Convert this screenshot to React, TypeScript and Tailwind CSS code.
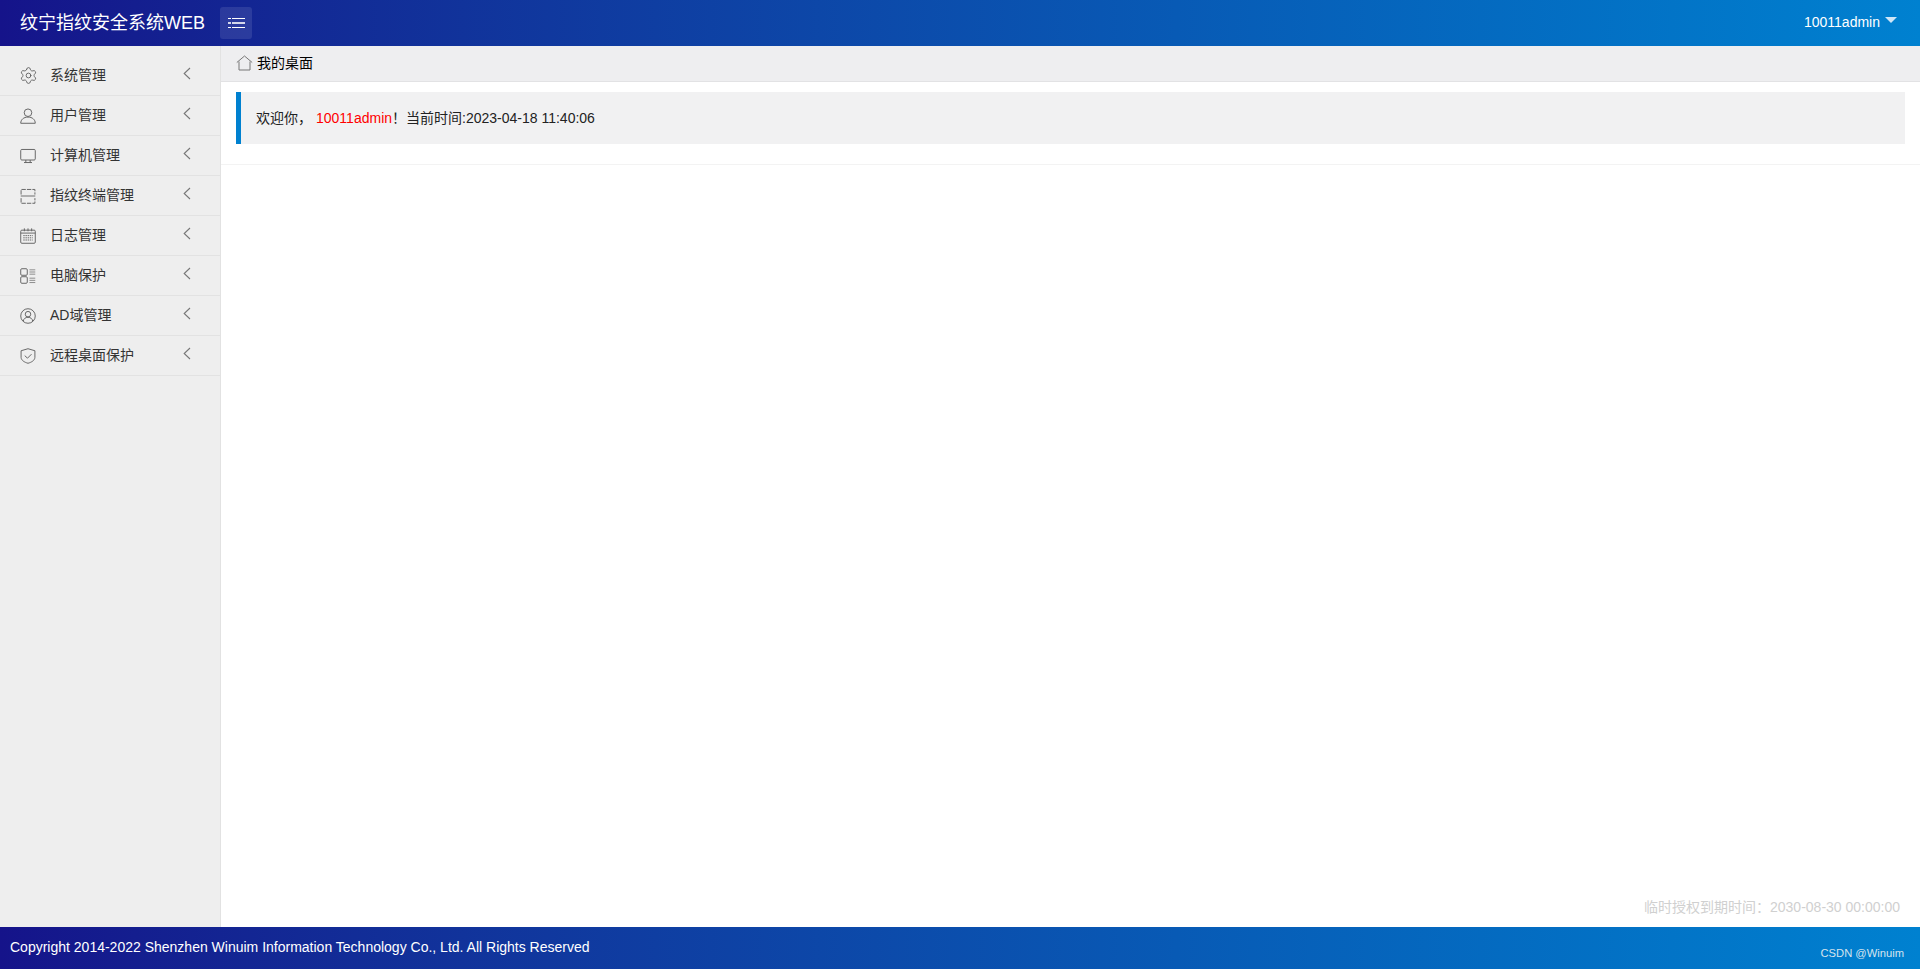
import { ReactNode } from "react";
import { Settings } from "lucide-react";

const stroke = {
  fill: "none",
  stroke: "#666",
  strokeWidth: 1.35,
};

/* ---- menu icons, drawn to match the iconfont glyphs ---- */
const icons: Record<string, ReactNode> = {
  user: (
    <>
      <circle cx="11" cy="6.500" r="5.200" />
      <path d="M1 21c0-5 4-8.500 10-8.500S21 16 21 21z" />
    </>
  ),
  monitor: (
    <>
      <rect x="1" y="2" width="20" height="14.500" rx="1.500" />
      <path d="M8 16.500v3.500M14 16.500v3.500M5.500 20h11" />
    </>
  ),
  terminal: (
    <>
      <path d="M1.500 9V2h19v7M1.500 14v7h19v-7" strokeDasharray="6 1.500" />
      <path d="M1 11h20" strokeWidth="1.800" stroke="#8c8c8c" />
    </>
  ),
  calendar: (
    <>
      <rect x="1" y="3" width="20" height="18" rx="1.500" />
      <path d="M6 .500v4M11 .500v4M16 .500v4M1 7h20" />
      <path d="M4.500 10.500h13M4.500 13.500h13M4.500 16.500h13" strokeDasharray="2 1" />
    </>
  ),
  apps: (
    <>
      <rect x="1" y="1" width="9" height="9" rx="1.500" />
      <rect x="1" y="12" width="9" height="9" rx="1.500" />
      <path d="M13 2.500h8M13 5.500h8M13 8.500h8M13 14h8M13 17h8M13 20h8" stroke="#8c8c8c" />
    </>
  ),
  account: (
    <>
      <circle cx="11" cy="11" r="10" />
      <circle cx="11" cy="8.500" r="3.800" />
      <path d="M4.500 18c.4-3.200 3-5.200 6.500-5.200s6.100 2 6.500 5.200" />
    </>
  ),
  shield: (
    <>
      <path d="M11 1l9.500 2.800v9c0 4-4.500 6.800-9.500 8.200-5-1.400-9.500-4.200-9.500-8.200v-9z" />
      <path d="M6.500 10.500l3.800 3.500 5.500-5.500" />
    </>
  ),
};

const menu = [
  { label: "系统管理", icon: "gear" },
  { label: "用户管理", icon: "user" },
  { label: "计算机管理", icon: "monitor" },
  { label: "指纹终端管理", icon: "terminal" },
  { label: "日志管理", icon: "calendar" },
  { label: "电脑保护", icon: "apps" },
  { label: "AD域管理", icon: "account" },
  { label: "远程桌面保护", icon: "shield" },
];

function SideItem({ label, icon }: { label: string; icon: string }) {
  return (
    <div className="flex h-[40px] items-center border-b border-[#e2e2e2] pl-[20px] text-[14px] text-[#333]">
      <span className="flex h-[16px] w-[16px] shrink-0 items-center justify-center">
        {icon === "gear" ? (
          <Settings size={19} strokeWidth={1.05} color="#555" className="shrink-0" />
        ) : (
          <svg width="16" height="16" viewBox="0 0 22 22" {...stroke} className="shrink-0">
            {icons[icon]}
          </svg>
        )}
      </span>
      <span className="ml-[14px]">{label}</span>
      <svg width="8" height="13" viewBox="0 0 8 13" fill="none" stroke="#777" strokeWidth="1.1" className="ml-auto mr-[29px] mt-[-4px]">
        <path d="M7 1L1.200 6.500 7 12" />
      </svg>
    </div>
  );
}

function MenuLine({ thick }: { thick?: boolean }) {
  return (
    <span className="flex items-center gap-[1px]">
      <i className={thick ? "h-[2px] w-[3px] bg-white/80" : "h-[1px] w-[3px] bg-white"} />
      <i className={thick ? "h-[2px] w-[13px] bg-white/80" : "h-[1px] w-[13px] bg-white"} />
    </span>
  );
}

export default function App() {
  return (
    <div
      className="flex h-[969px] flex-col overflow-hidden bg-white text-[14px] text-[#222]"
      style={{ fontFamily: '"Liberation Sans", "Noto Sans CJK SC", sans-serif' }}
    >
      {/* header */}
      <header className="flex h-[46px] shrink-0 items-center bg-gradient-to-r from-[#15138a] to-[#0081d0] text-white">
        <div className="ml-[20px] text-[18px]">纹宁指纹安全系统WEB</div>
        <button className="ml-[15px] flex h-[32px] w-[32px] flex-col items-center justify-center gap-[3px] rounded-[3px] bg-white/10">
          <MenuLine />
          <MenuLine thick />
          <MenuLine />
        </button>
        <div className="ml-auto mr-[23px] flex items-center pb-[2px] text-[14px]">
          10011admin
          <span className="ml-[5px] mt-[-4px] h-0 w-0 border-x-[6px] border-t-[6px] border-x-transparent border-t-[#cfe6f7]" />
        </div>
      </header>

      <div className="flex min-h-0 flex-1">
        {/* sidebar */}
        <aside className="w-[221px] shrink-0 border-r border-[#e2e2e2] bg-[#eeeeee] pt-[10px]">
          {menu.map((m) => (
            <SideItem key={m.label} label={m.label} icon={m.icon} />
          ))}
        </aside>

        {/* main */}
        <main className="flex min-w-0 flex-1 flex-col">
          <div className="flex h-[36px] shrink-0 items-center border-b border-[#e2e2e4] bg-[#eeeef0] pl-[15px] text-[14px] text-black">
            <svg width="17" height="16" viewBox="0 0 17 16" fill="none" stroke="#777" strokeWidth="1" className="mt-[-2px]">
              <path d="M.8 7.500L8.500 1l7.700 6.500M3 6.500v8.500h11v-8.500" />
            </svg>
            <span className="ml-[4px]">我的桌面</span>
          </div>

          <div className="border-b border-[#f3f3f3] px-[15px] pb-[20px] pt-[10px]">
            <div className="flex h-[52px] items-center border-l-[5px] border-[#0081d0] bg-[#f1f1f2] pl-[15px] text-[14px] text-[#222]">
              <span>欢迎你，</span>
              <span className="ml-[4px] text-[#ff0000]">10011admin</span>
              <span>！当前时间:2023-04-18 11:40:06</span>
            </div>
          </div>

          <div className="mt-auto pb-[9px] pr-[20px] text-right text-[14px] text-[#d0d0d0]">
            临时授权到期时间：2030-08-30 00:00:00
          </div>
        </main>
      </div>

      {/* footer */}
      <footer className="relative flex h-[42px] shrink-0 items-center bg-gradient-to-r from-[#15138a] to-[#0081d0] pb-[1px] pl-[10px] text-[14px] text-white">
        Copyright 2014-2022 Shenzhen Winuim Information Technology Co., Ltd. All Rights Reserved
        <span className="absolute bottom-[7px] right-[16px] text-[11.200px] text-[#d5e3ee]">CSDN @Winuim</span>
      </footer>
    </div>
  );
}
